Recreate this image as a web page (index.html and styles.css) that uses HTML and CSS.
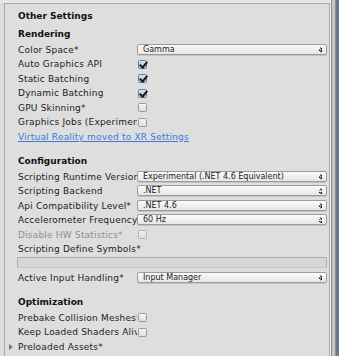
FILE: index.html
```html
<!DOCTYPE html>
<html lang="en">
<head>
  <meta charset="UTF-8" />
  <title>Other Settings</title>
  <link rel="stylesheet" href="styles.css">
</head>
<body>
  <div class="inspector">
    <div class="frame">
      <div class="title">Other Settings</div>

      <div class="header first">Rendering</div>
      <div class="row"><span class="label">Color Space*</span><div class="popup">Gamma<i class="arrows"></i></div></div>
      <div class="row"><span class="label">Auto Graphics API</span><span class="check on"></span></div>
      <div class="row"><span class="label">Static Batching</span><span class="check on"></span></div>
      <div class="row"><span class="label">Dynamic Batching</span><span class="check on"></span></div>
      <div class="row"><span class="label">GPU Skinning*</span><span class="check"></span></div>
      <div class="row"><span class="label">Graphics Jobs (Experimental)*</span><span class="check"></span></div>
      <div class="row"><a class="link" href="#">Virtual Reality moved to XR Settings</a></div>

      <div class="header">Configuration</div>
      <div class="row"><span class="label">Scripting Runtime Version*</span><div class="popup">Experimental (.NET 4.6 Equivalent)<i class="arrows"></i></div></div>
      <div class="row"><span class="label">Scripting Backend</span><div class="popup">.NET<i class="arrows"></i></div></div>
      <div class="row"><span class="label">Api Compatibility Level*</span><div class="popup">.NET 4.6<i class="arrows"></i></div></div>
      <div class="row"><span class="label">Accelerometer Frequency</span><div class="popup">60 Hz<i class="arrows"></i></div></div>
      <div class="row disabled"><span class="label">Disable HW Statistics*</span><span class="check"></span></div>
      <div class="row"><span class="label wide">Scripting Define Symbols*</span></div>
      <div class="textfield"></div>
      <div class="row"><span class="label">Active Input Handling*</span><div class="popup">Input Manager<i class="arrows"></i></div></div>

      <div class="header">Optimization</div>
      <div class="row"><span class="label">Prebake Collision Meshes*</span><span class="check"></span></div>
      <div class="row"><span class="label">Keep Loaded Shaders Alive*</span><span class="check"></span></div>
      <div class="row"><span class="foldout"></span><span class="label wide">Preloaded Assets*</span></div>
    </div>
    <div class="scrollbar"><div class="track"></div></div>
  </div>
</body>
</html>
```

FILE: styles.css
```css
:root {
  --bg: #dedede;
  --line: #a9a9a9;
  --text: #1c1c1c;
  --muted: #8e8e8e;
  --link: #3b79d8;
}

* {
  margin: 0;
  padding: 0;
  box-sizing: border-box;
}

body {
  background: var(--bg);
  font-family: "DejaVu Sans", Verdana, sans-serif;
  font-size: 9px;
  color: var(--text);
  overflow: hidden;
}

.inspector {
  display: flex;
  height: 356px;
  padding-top: 3px;
  background: linear-gradient(#e6e6e6 0, #e6e6e6 3px, var(--bg) 3px);
}

.frame {
  width: 326px;
  margin-left: 4px;
  border-top: 1px solid var(--line);
  border-left: 1px solid var(--line);
  border-right: 1px solid var(--line);
  padding: 4.6px 2px 0 13px;
}

.title,
.header {
  font-weight: bold;
  line-height: 14.5px;
  height: 14.5px;
  color: #111;
}

.header {
  margin-top: 9.5px;
  margin-bottom: 1.5px;
}
.header.first {
  margin-top: 4px;
  margin-bottom: 1px;
}

.row {
  display: flex;
  align-items: center;
  height: 14.5px;
  line-height: 14.5px;
  position: relative;
}

.label {
  width: 119px;
  flex: none;
  white-space: nowrap;
  overflow: hidden;
  letter-spacing: 0.2px;
}
.label.wide {
  width: auto;
}

.disabled .label {
  color: var(--muted);
}

.popup {
  flex: 1;
  height: 11px;
  margin-top: -1px;
  border: 1px solid #9c9c9c;
  border-radius: 2px;
  background: linear-gradient(#fbfbfb, #e6e6e6);
  box-shadow: 0 1px 0 rgba(0, 0, 0, 0.12);
  font-size: 8px;
  line-height: 9px;
  padding-left: 5px;
  position: relative;
  white-space: nowrap;
}

.arrows {
  position: absolute;
  right: 4px;
  top: 2px;
  width: 3px;
  height: 6px;
  background:
    linear-gradient(to bottom right, transparent 50%, #111 50%) 0 0 / 1.5px 2.5px no-repeat,
    linear-gradient(to bottom left, transparent 50%, #111 50%) 1.5px 0 / 1.5px 2.5px no-repeat,
    linear-gradient(to top right, transparent 50%, #111 50%) 0 3.5px / 1.5px 2.5px no-repeat,
    linear-gradient(to top left, transparent 50%, #111 50%) 1.5px 3.5px / 1.5px 2.5px no-repeat;
}

.check {
  width: 9px;
  height: 9px;
  margin-left: 1px;
  border: 1px solid #9a9a9a;
  border-radius: 1.5px;
  background: linear-gradient(#f6f6f6, #dedede);
  position: relative;
}
.check.on {
  border-color: #6c7d94;
  background: linear-gradient(#d6e2f4, #a9bfe0);
}
.check.on::after {
  content: "";
  position: absolute;
  left: 1.5px;
  top: -1px;
  width: 3px;
  height: 6px;
  border-right: 2px solid #141820;
  border-bottom: 2px solid #141820;
  transform: rotate(40deg);
}
.disabled .check {
  border-color: #b4b4b4;
  background: linear-gradient(#eeeeee, #e0e0e0);
}

.link {
  color: var(--link);
  text-decoration: underline;
  text-underline-offset: 1px;
  letter-spacing: 0.2px;
}

.textfield {
  height: 11px;
  margin-top: 0.4px;
  margin-bottom: 2.6px;
  margin-left: -1px;
  border: 1px solid #ababab;
  border-bottom-color: #c9c9c9;
  background: #d6d6d6;
}

.foldout {
  position: absolute;
  left: -9px;
  top: 4px;
  width: 0;
  height: 0;
  border-top: 3px solid transparent;
  border-bottom: 3px solid transparent;
  border-left: 4px solid #737373;
}

.scrollbar {
  width: 9px;
  margin-top: -3px;
  border-left: 1px solid #f2f2f2;
  display: flex;
}
.scrollbar .track {
  flex: 1;
  border-left: 1px solid #8a8a8a;
  background: linear-gradient(to right, #c6c6c6 0, #c6c6c6 3px, #8f8f8f 3px, #8f8f8f 4px, #6b7888 4px);
}
```
